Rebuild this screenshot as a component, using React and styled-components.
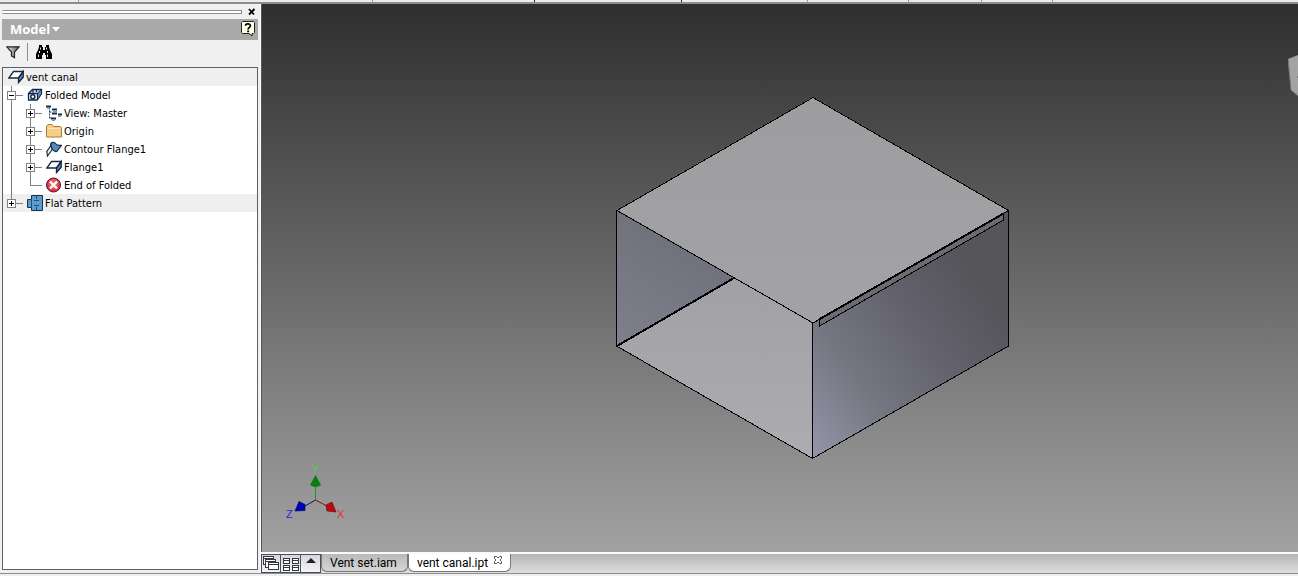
import React from "react";
import styled, { createGlobalStyle, css } from "styled-components";

const GlobalStyle = createGlobalStyle`
  *, *::before, *::after { box-sizing: border-box; }
  html, body { margin: 0; padding: 0; }
  body {
    background: #f0f0f0;
    color: #000;
    font-family: "DejaVu Sans Condensed", "Noto Sans", sans-serif;
    font-size: 11px;
    line-height: 18px;
  }
  button { font: inherit; color: inherit; padding: 0; margin: 0; border: 0; background: none; }
  ul { list-style: none; margin: 0; padding: 0; }
  svg { display: block; flex: none; }
`;

const Page = styled.div`
  display: flex;
  flex-direction: column;
  min-height: 100vh;
  background: #f0f0f0;
`;

const RibbonEdge = styled.div`
  display: flex;
  height: 4px;
  flex: none;
  background: #ececec;
  border-bottom: 2px solid #8c8c8c;
`;

const RibbonCell = styled.span`
  flex: ${(p) => p.$grow} 1 0;
  border-right: 1px solid ${(p) => p.$color || "#999"};
`;

const Workspace = styled.div`
  display: flex;
  flex: 1;
  border-bottom: 1px solid #8e8e8e;
  margin-bottom: 2px;
`;

const Browser = styled.aside`
  display: flex;
  flex-direction: column;
  flex: none;
  width: 261px;
  padding: 1px 2px 3px 2px;
  border-right: 1px solid #fafafa;
  background: #f0f0f0;
`;

const GripRow = styled.div`
  display: flex;
  align-items: center;
  gap: 4px;
  height: 14px;
  flex: none;
`;

const Grip = styled.span`
  flex: 1;
  height: 4px;
  border: 1px solid #8c8c8c;
  border-left-color: #f0f0f0;
  background: #fff;
`;

const CloseButton = styled.button`
  display: grid;
  place-items: center;
  width: 12px;
  height: 12px;
`;

const TitleBar = styled.div`
  display: flex;
  align-items: center;
  justify-content: space-between;
  flex: none;
  height: 21px;
  padding: 0 3px 1px 8px;
  background: #a9a9a9;
`;

const TitleButton = styled.button`
  display: flex;
  align-items: center;
  gap: 2px;
  color: #fff;
  font-family: "Open Sans", "Noto Sans", sans-serif;
  font-size: 13px;
  font-weight: 700;
`;

const HelpButton = styled.button`
  display: block;
`;

const Tools = styled.div`
  display: flex;
  align-items: center;
  flex: none;
  height: 27px;
  padding: 0 3px 3px;
`;

const ToolButton = styled.button`
  display: grid;
  place-items: center;
  width: 16px;
  height: 18px;
`;

const ToolRule = styled.span`
  width: 1px;
  height: 18px;
  margin: 0 8px 0 6px;
  background: #8c8c8c;
`;

const Tree = styled.ul`
  flex: 1;
  border: 1px solid #5f5f66;
  background: #fff;
`;

const line = (x, h) =>
  `linear-gradient(#808080, #808080) ${x}px 0 / 1px ${h} no-repeat`;

const guides = (depth, last) => {
  if (depth === 0) return "";
  const own = line(8 + 19 * (depth - 1), last ? "50%" : "100%");
  return depth === 2 ? `${line(8, "100%")}, ${own}, ` : `${own}, `;
};

const Row = styled.div`
  display: flex;
  align-items: center;
  height: 18px;
  padding-left: ${(p) => (p.$depth ? 4 + 19 * (p.$depth - 1) : 5)}px;
  ${(p) => css`
    background: ${guides(p.$depth, p.$last)} linear-gradient(${p.$shaded ? "#efefef, #efefef" : "#fff, #fff"});
  `}
`;

const Expander = styled.button`
  display: grid;
  place-items: center;
  width: 9px;
  height: 9px;
  border: 1px solid #808080;
  background: #fff;
`;

const Elbow = styled.span`
  width: 5px;
  height: 1px;
  margin-left: 4px;
  background: #808080;
`;

const Connector = styled.span`
  width: 7px;
  height: 1px;
  margin-right: 4px;
  background: #808080;
`;

const Label = styled.span`
  padding: 2px 0 0 2px;
  white-space: nowrap;
`;

const Main = styled.main`
  display: flex;
  flex-direction: column;
  flex: 1;
  min-width: 0;
`;

const Viewport = styled.section`
  position: relative;
  flex: 1;
  min-height: 200px;
  border-left: 1px solid #555;
  background: linear-gradient(#2f2f2f, #a2a2a2);
`;

const Model = styled.svg`
  position: absolute;
  inset: 0;
  width: 100%;
  height: 100%;
`;

const Triad = styled.svg`
  position: absolute;
  left: 18px;
  bottom: 20px;
`;

const ViewCube = styled.svg`
  position: absolute;
  right: 0;
  top: 51px;
`;

const DocBar = styled.nav`
  display: flex;
  align-items: flex-start;
  flex: none;
  height: 21px;
  border-top: 2px solid #fafafa;
  background: linear-gradient(#b4b4b4, #dedede);
`;

const LayoutButton = styled.button`
  display: grid;
  place-items: center;
  width: 20px;
  height: 19px;
  border: 1px solid #4c4f57;
  border-left-width: ${(p) => (p.$first ? 1 : 0)}px;
  background: linear-gradient(#d4d7dc, #f4f5f7);
`;

const Tab = styled.button`
  display: flex;
  align-items: center;
  gap: 6px;
  height: 18px;
  padding: 1px ${(p) => (p.$active ? 8 : 10)}px 0 8px;
  border: 1px solid #777;
  border-top: 0;
  border-radius: 0 0 6px 6px;
  background: ${(p) => (p.$active ? "#fff" : "linear-gradient(#b9b9b9, #d6d6d6)")};
  font-family: Roboto, sans-serif;
  font-size: 12px;
  white-space: nowrap;
`;

const TabClose = styled.span`
  align-self: flex-start;
  padding-top: 1px;
`;

const CloseGlyph = () => (
  <svg width="8" height="8" viewBox="0 0 8 8">
    <path d="M1 1l5 5.500M6.500 1L1 6.500" stroke="#000" strokeWidth="1.800" />
  </svg>
);

const HelpGlyph = () => (
  <svg width="14" height="16" viewBox="0 0 14 16">
    <path d="M1.500 .5h11l1 1v10l-1 1H11v2.500l-3-2.500H1.500l-1-1v-10z" fill="#ffffe1" stroke="#222" />
    <path d="M4.500 4.700C4.600 2.200 9.500 2.200 9.400 4.800c0 1.500-2.300 1.700-2.300 3.700" fill="none" stroke="#000" strokeWidth="1.700" />
    <path d="M6.200 9.500h1.900v1.700H6.200z" />
  </svg>
);

const FilterGlyph = () => (
  <svg width="14" height="13" viewBox="0 0 14 13">
    <defs>
      <linearGradient id="funnel"><stop stopColor="#eee" /><stop offset="1" stopColor="#555" /></linearGradient>
    </defs>
    <path d="M.8.800h12.400L8.500 6v5.800L5.500 10V6z" fill="url(#funnel)" stroke="#222" strokeWidth="1.200" />
  </svg>
);

const FindGlyph = () => (
  <svg width="16" height="14" viewBox="0 0 16 14">
    <path d="M3 0h3v2h1v3h2V2h1V0h3v2l1 3 2 4v5h-6v-4H9V8H7v2H6v4H0V9l2-4 1-3z" fill="#000" />
    <path d="M4.500 2.500v2M3.500 6v2M2.500 9.500v2.500M10.500 2.500v2M11.500 6v2M11.500 9.500v2.500" stroke="#e8e8e8" />
  </svg>
);

const ICONS = {
  sheet: (
    <>
      <path d="M5.500 2.500h9.700L10.500 9H.8z" fill="#fff" stroke="#1b2a3e" strokeWidth="1.300" />
      <path d="M15.200 2.500v5.700L10.500 13.500V9z" fill="#5688bd" stroke="#142238" strokeWidth="1.300" />
    </>
  ),
  folded: (
    <>
      <path d="M1.500 6.500l4-4h9v4l-4.500 6.500h-8.500z" fill="#d6e6f5" stroke="#132844" strokeWidth="1.300" />
      <path d="M10.500 6l4-3.500v4.300L10.500 13z" fill="#5688bd" stroke="#132844" />
      <path d="M1.500 6.500h8.800M6 2.500v3M9.500 3v2" stroke="#132844" strokeWidth="1.300" />
      <circle cx="5.800" cy="9.800" r="2" fill="#fff" stroke="#132844" strokeWidth="1.400" />
    </>
  ),
  view: (
    <>
      <path d="M3.500 2.500v10.500M3.500 7h3M3.500 13h3" fill="none" stroke="#26384f" strokeDasharray="2 1" />
      <path d="M0 1.500h5M6 4.500h5M6 8.500h5M5 13.500h5M12 9.500h4" stroke="#142a47" strokeWidth="2" />
      <path d="M1 3.500h3M7 6.500h4M12 11.500h3M6 15.500h3" stroke="#6da0d0" />
    </>
  ),
  folder: (
    <>
      <path d="M.5 14V3.500l1.500-2h4l1.500 2h7l1 1V14z" fill="#f5cf88" stroke="#a87b38" />
      <path d="M1.500 5.500h13" stroke="#ffe7b5" />
    </>
  ),
  contour: (
    <>
      <path d="M4.500 5C4.500.500 8 .500 10 3c1.500 2 3.500 1.300 5.500 1.300L10.800 10.500C8 11 6.500 9 5.500 7.500z" fill="#5688bd" stroke="#172b45" strokeWidth="1.200" />
      <path d="M5 4.500L.8 10.500 1.500 15l4.700-6.500z" fill="#e9eff5" stroke="#172b45" strokeWidth="1.200" />
    </>
  ),
  end: (
    <>
      <circle cx="7.500" cy="8" r="7" fill="#dc3547" stroke="#55121a" />
      <circle cx="7.500" cy="7" r="5" fill="#ee7480" opacity=".6" />
      <path d="M4 4.500l7 7M11 4.500l-7 7" stroke="#fff" strokeWidth="2.400" />
    </>
  ),
  flat: (
    <>
      <path d="M4.500.5h11v15h-11v-3h-4v-8h4z" fill="#5c9bd0" stroke="#163552" />
      <path d="M4.500 4.500v8M9.500 1v3M9.500 12v3" stroke="#244d75" />
      <path d="M7 5.500h5M7 10.500h5" stroke="#244d75" />
    </>
  ),
};

const Icon = ({ name }) => (
  <svg width="16" height="16" viewBox="0 0 16 16" aria-hidden="true">{ICONS[name]}</svg>
);

const NODES = [
  { text: "vent canal", icon: "sheet", depth: 0, shaded: true },
  { text: "Folded Model", icon: "folded", depth: 1, open: true },
  { text: "View: Master", icon: "view", depth: 2 },
  { text: "Origin", icon: "folder", depth: 2 },
  { text: "Contour Flange1", icon: "contour", depth: 2 },
  { text: "Flange1", icon: "sheet", depth: 2 },
  { text: "End of Folded", icon: "end", depth: 2, leaf: true, last: true },
  { text: "Flat Pattern", icon: "flat", depth: 1, last: true, shaded: true },
];

const TreeNode = ({ node }) => (
  <li role="treeitem" aria-expanded={node.leaf ? undefined : !!node.open || node.depth === 0}>
    <Row $depth={node.depth} $last={node.last} $shaded={node.shaded}>
      {node.depth > 0 && (
        <>
          {node.leaf ? (
            <Elbow />
          ) : (
            <Expander aria-label={`${node.open ? "Collapse" : "Expand"} ${node.text}`}>
              <svg width="7" height="7" viewBox="0 0 7 7">
                <path d={node.open ? "M1 3.500h5" : "M1 3.500h5M3.500 1v5"} stroke="#000" shapeRendering="crispEdges" />
              </svg>
            </Expander>
          )}
          <Connector />
        </>
      )}
      <Icon name={node.icon} />
      <Label>{node.text}</Label>
    </Row>
  </li>
);

const BoxModel = () => (
  <Model viewBox="262 4 1036 548" role="img" aria-label="Sheet metal vent canal">
    <defs>
      <linearGradient id="top" x1="0" y1="0" x2="0" y2="1"><stop stopColor="#9d9d9f" /><stop offset="1" stopColor="#a3a3a7" /></linearGradient>
      <linearGradient id="floor" x1="0" y1="0" x2="0" y2="1"><stop stopColor="#a1a0a5" /><stop offset="1" stopColor="#acacb1" /></linearGradient>
      <linearGradient id="inner" x1="0" y1="1" x2=".5" y2="0"><stop stopColor="#7f808c" /><stop offset="1" stopColor="#6c6e78" /></linearGradient>
      <linearGradient id="side" gradientUnits="userSpaceOnUse" x1="815" y1="450" x2="1000" y2="310">
        <stop stopColor="#9294a6" /><stop offset=".33" stopColor="#747681" /><stop offset=".75" stopColor="#605e68" /><stop offset="1" stopColor="#56555a" />
      </linearGradient>
    </defs>
    <path d="M617 210v136l117-68z" fill="url(#inner)" />
    <path d="M617 346l117-68 79 45v136z" fill="url(#floor)" />
    <path d="M813 323l195-113v136L813 459z" fill="url(#side)" />
    <path d="M813 97l195 113-195 113L617 210z" fill="url(#top)" />
    <path d="M819 319l184-106v7L819 326z" fill="#6b6b71" />
    <g fill="none" stroke="#000" shapeRendering="crispEdges">
      <path d="M813 97.500l195.500 113L813 323 617 210.500z" />
      <path d="M616.500 210v136L812.500 458.500V323M1008.500 210v136L812.500 458.500" />
      <path d="M617 346l117-68M819 319.500l184.500-106" strokeWidth="2" />
      <path d="M819.500 319v7l184-106v-7" />
    </g>
  </Model>
);

const AxisTriad = () => (
  <Triad width="66" height="72" viewBox="0 -6 66 72" role="img" aria-label="X Y Z axes">
    <path d="M35.500 34V20" stroke="#1c9b22" />
    <path d="M35.500 34L25 40" stroke="#111166" />
    <path d="M35.500 34L47 40" stroke="#701818" />
    <path d="M35.500 9l5.500 10q-5.500 4-11 0z" fill="#087d10" />
    <path d="M15 45l4-9.500 6 3v6z" fill="#0000b4" stroke="#00005e" strokeWidth=".6" />
    <path d="M56 46l-4-10-6 3 1 6z" fill="#bd0909" stroke="#640606" strokeWidth=".6" />
    <g fontFamily="Liberation Sans, sans-serif" fontSize="11">
      <text x="32" y="7" fill="#58c858">Y</text>
      <text x="6" y="52" fill="#2828cf">Z</text>
      <text x="57" y="52" fill="#ef2929">X</text>
    </g>
  </Triad>
);

export default function App() {
  return (
    <>
      <GlobalStyle />
      <Page>
        <RibbonEdge>
          <RibbonCell $grow={79} />
          <RibbonCell $grow={295} />
          <RibbonCell $grow={162} $color="#222" />
          <RibbonCell $grow={147} $color="#222" />
          <RibbonCell $grow={126} />
          <RibbonCell $grow={100} />
          <RibbonCell $grow={73} />
          <RibbonCell $grow={70} />
          <RibbonCell $grow={246} $color="#ececec" />
        </RibbonEdge>
        <Workspace>
          <Browser>
            <GripRow>
              <Grip />
              <CloseButton aria-label="Close browser"><CloseGlyph /></CloseButton>
            </GripRow>
            <TitleBar>
              <TitleButton>
                Model
                <svg width="8" height="5" viewBox="0 0 8 5"><path d="M0 0h8L4 4.500z" fill="#fff" /></svg>
              </TitleButton>
              <HelpButton aria-label="Help"><HelpGlyph /></HelpButton>
            </TitleBar>
            <Tools>
              <ToolButton aria-label="Filter"><FilterGlyph /></ToolButton>
              <ToolRule />
              <ToolButton aria-label="Find"><FindGlyph /></ToolButton>
            </Tools>
            <Tree role="tree" aria-label="Model browser">
              {NODES.map((node) => <TreeNode key={node.text} node={node} />)}
            </Tree>
          </Browser>
          <Main>
            <Viewport>
              <BoxModel />
              <AxisTriad />
              <ViewCube width="10" height="41" viewBox="0 0 10 41" aria-hidden="true">
                <path d="M0 4l10-4v41l-7-6z" fill="#a3a3a3" />
                <path d="M0 4l3 31 7 6" fill="none" stroke="#777" />
                <path d="M9 22h1" stroke="#555" />
              </ViewCube>
            </Viewport>
            <DocBar aria-label="Open documents">
              <LayoutButton $first aria-label="Cascade windows">
                <svg width="16" height="15" viewBox="0 0 16 15" fill="#fff" stroke="#33363d" shapeRendering="crispEdges">
                  <path d="M.5.500h10v8H.5z" />
                  <path d="M.5 2.500h10" />
                  <path d="M2.500 3.500h10v8h-10z" />
                  <path d="M2.500 5.500h10" />
                  <path d="M5.500 6.500h10v7h-10z" />
                  <path d="M5.500 8.500h10" />
                </svg>
              </LayoutButton>
              <LayoutButton aria-label="Tile windows">
                <svg width="16" height="14" viewBox="0 0 16 14" fill="#fff" stroke="#33363d" shapeRendering="crispEdges">
                  <path d="M.5 1.500h6v5h-6zM9.500 1.500h6v5h-6zM.5 8.500h6v5h-6zM9.500 8.500h6v5h-6zM0 3.500h7M9 3.500h7M0 10.500h7M9 10.500h7" />
                </svg>
              </LayoutButton>
              <LayoutButton aria-label="Show document list">
                <svg width="10" height="11" viewBox="0 0 10 11"><path d="M0 5l5-5 5 5z" fill="#222" /></svg>
              </LayoutButton>
              <Tab>Vent set.iam</Tab>
              <Tab $active aria-current="page">
                vent canal.ipt
                <TabClose>
                  <svg width="8" height="8" viewBox="0 0 8 8" fill="#fff" stroke="#555">
                    <path d="M.5.500h2L4 2 5.500.500h2v2L6 4l1.500 1.500v2h-2L4 6 2.500 7.500h-2v-2L2 4 .5 2.500z" />
                  </svg>
                </TabClose>
              </Tab>
            </DocBar>
          </Main>
        </Workspace>
      </Page>
    </>
  );
}
